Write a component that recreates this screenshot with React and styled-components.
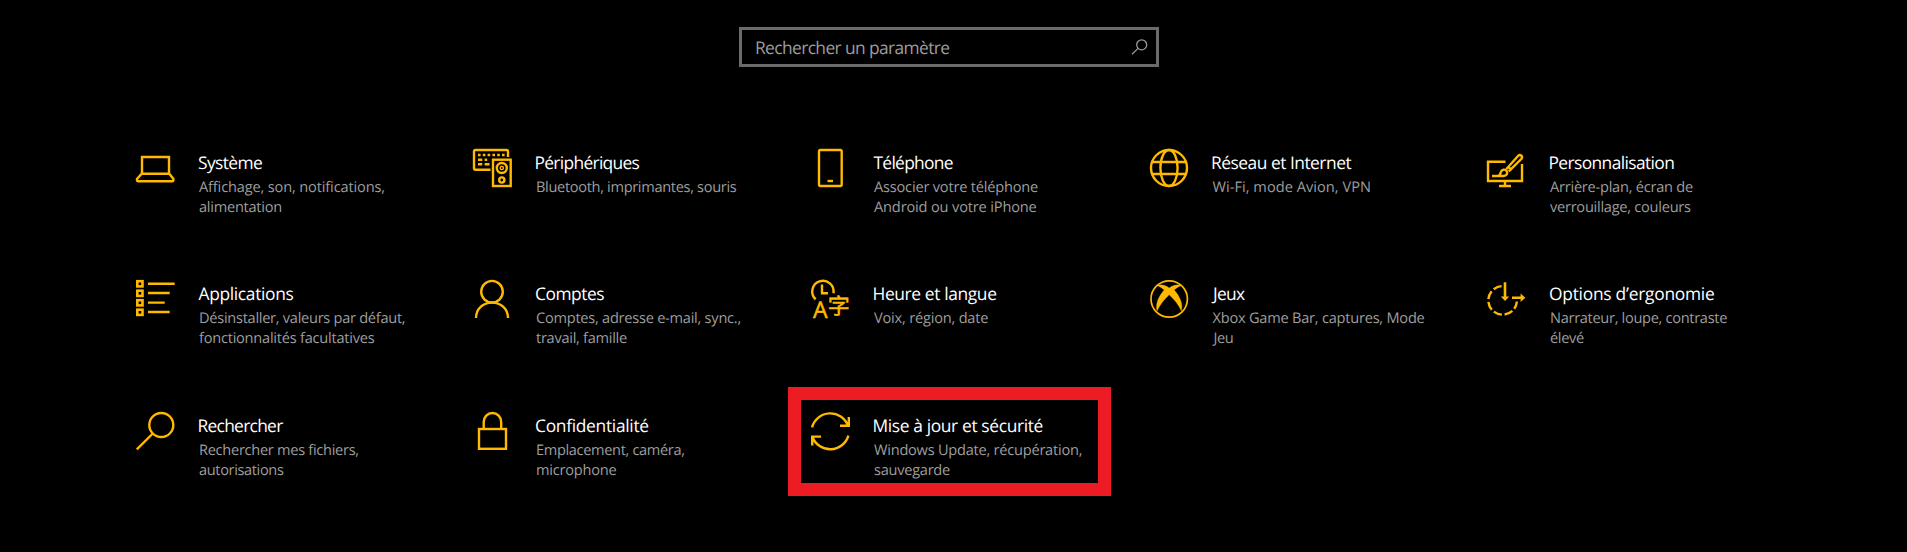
import React from "react";
import styled, { createGlobalStyle } from "styled-components";

const Global = createGlobalStyle`
  body { margin: 0; background: #000; }
`;

const Page = styled.main`
  box-sizing: border-box;
  width: 1907px;
  height: 552px;
  padding-top: 27px;
  overflow: hidden;
  background: #000;
  color: #fff;
  font-family: "Open Sans", "Noto Sans", sans-serif;
  text-rendering: geometricPrecision;
`;

const SearchBox = styled.div`
  box-sizing: border-box;
  display: flex;
  align-items: center;
  justify-content: space-between;
  width: 420px;
  height: 40px;
  margin-left: 739px;
  padding: 0 7px 0 13px;
  border: 3px solid #6b6b6b;
`;

const Text = styled.span`
  display: block;
  width: max-content;
  letter-spacing: ${(p) => p.$tracking}px;
  text-indent: ${(p) => p.$indent || 0}px;
  white-space: nowrap;
`;

const Placeholder = styled(Text)`
  padding-top: 2px;
  color: #9c9c9c;
  font-size: 17.4px;
  line-height: 24px;
`;

const SearchGlyph = styled.svg`
  width: 18px;
  height: 18px;
  fill: none;
  stroke: #999;
  stroke-width: 1.3;
`;

const Tiles = styled.div`
  display: grid;
  grid-template-columns: 337px repeat(4, 338px);
  grid-template-rows: 131px 132px 131px;
  margin: 82px 0 0 136px;
`;

const Tile = styled.section`
  position: relative;
  display: flex;
  gap: 22px;
`;

const Highlight = styled.div`
  position: absolute;
  box-sizing: border-box;
  top: -25px;
  left: -23px;
  width: 323px;
  height: 109px;
  border: 13px solid #ed1c24;
`;

const Icon = styled.svg`
  flex: none;
  width: 40px;
  height: 40px;
  overflow: visible;
  fill: none;
  stroke: #ffb900;
  stroke-width: 2.4;
`;

const Copy = styled.div`
  padding-top: 2px;
`;

const Title = styled(Text)`
  margin-bottom: 2px;
  font-size: 17.4px;
  line-height: 24px;
`;

const Detail = styled(Text)`
  padding-left: 1px;
  color: #9e9e9e;
  font-size: 14.6px;
  line-height: 20px;
`;

const Glyph = styled.text`
  fill: #ffb900;
  stroke: #ffb900;
  stroke-width: 0.5;
  font-family: "Open Sans", "Noto Sans CJK SC", sans-serif;
  font-size: ${(p) => p.$size}px;
`;

const icons = {
  system: (
    <>
      <path d="M6 24V8H33V24" />
      <path d="M5.7 24.7H33.3L37.4 30V31Q37.4 32.3 36 32.3H2.4Q1 32.3 1 31V30Z" />
    </>
  ),
  devices: (
    <>
      <path d="M17.5 20.7H2.5Q1 20.7 1 19.2V2.5Q1 1 2.5 1H33.5Q35 1 35 2.5V8" />
      <path d="M5 6H33" strokeDasharray="2.6 2.2" />
      <path d="M5 10.7H9.3M11.6 10.7H14.2M5 15.3H9.3M11.6 15.3H16.5" />
      <rect x="20" y="10.7" width="17.7" height="26.3" />
      <circle cx="28.8" cy="19" r="5" />
      <circle cx="28.8" cy="19" r="1.6" strokeWidth="1.4" />
      <circle cx="28.8" cy="31" r="2.6" />
    </>
  ),
  phone: (
    <>
      <rect x="8" y="1" width="22.7" height="36" rx="1.5" />
      <path d="M16.5 32H22" />
    </>
  ),
  network: (
    <>
      <circle cx="20" cy="19" r="18" />
      <ellipse cx="20" cy="19" rx="8.6" ry="18" />
      <path d="M3 13H37M3 25H37" />
    </>
  ),
  personalization: (
    <>
      <path d="M18.5 12.7H1V32H35V15" />
      <path d="M18 33V37M12 37H24" />
      <path d="M5 27H16.5C19.5 27 21 24.5 19.8 22.2C18 19.6 14.4 20.4 13.7 23.4C13.4 25.3 12.8 26.5 11 27" />
      <path d="M19.2 20.2L31.2 6.8Q32.6 5.4 34.2 6.5Q35.8 8 34.5 9.8L21.8 22.4M21.2 17.8L24.4 20.6" />
    </>
  ),
  apps: (
    <>
      {[3.8, 13.3, 22.8, 32.3].map((y) => (
        <rect key={y} x="1.3" y={y - 2.6} width="5.2" height="5.2" strokeWidth="2.6" />
      ))}
      <path d="M12 3.7H38.7M12 13H33.7M12 22.6H28.7M12 32H33.7" />
    </>
  ),
  accounts: (
    <>
      <circle cx="19" cy="11.7" r="10.8" />
      <path d="M3 38C3 29 10 22.6 19 22.6S35 29 35 38" />
    </>
  ),
  time: (
    <>
      <path d="M4.6 19.4A10.7 10.7 0 1 1 22.5 13.3" />
      <path d="M11 4.5V13.3H17" />
      <Glyph x="2.1" y="38" $size={23}>A</Glyph>
      <Glyph x="16.8" y="34" $size={22}>字</Glyph>
    </>
  ),
  gaming: (
    <>
      <circle cx="20.2" cy="19" r="18.2" strokeWidth="1.7" />
      <path
        d="M7.6 5.4C12 4 16.5 5.4 20.2 8C24 5.4 28.5 4 32.8 5.4C30 6 27.8 7.6 25.2 10C31 16.5 34.2 24 32.4 31C29.5 25 25.5 19.5 20.2 14.8C15 19.5 11 25 8 31C6.2 24 9.4 16.5 15.2 10C12.6 7.6 10.4 6 7.6 5.4Z"
        fill="#ffb900"
        strokeWidth="0.3"
      />
    </>
  ),
  access: (
    <>
      <path d="M14.6 6.1A14.3 14.3 0 1 0 29.9 21.5" strokeDasharray="8.6 2.8" />
      <path d="M18 2.3V18M25 17.8H35" strokeWidth="2.6" />
      <path d="M13.8 16.5H22.2L18 21ZM33.6 13.5V22.1L38.3 17.8Z" fill="#ffb900" stroke="none" />
    </>
  ),
  search: (
    <>
      <circle cx="25.3" cy="13" r="12" />
      <path d="M16.8 21.5L.8 37.3" />
    </>
  ),
  privacy: (
    <>
      <rect x="6" y="17" width="27" height="19.8" />
      <path d="M10.7 17V10A8.7 9 0 0 1 28.2 10V17" />
    </>
  ),
  update: (
    <>
      <path d="M1 15.4A18.9 18.9 0 0 1 37 13.8M37.8 5V13.8H29" />
      <path d="M37.4 23.6A19 19 0 0 1 1.4 25M1.2 33.4V24.6H10" />
    </>
  ),
};

const line = (text, tracking, indent) => ({ text, tracking, indent });

const tiles = [
  {
    icon: "system",
    title: line("Système", -0.6),
    details: [line("Affichage, son, notifications,", -0.15), line("alimentation", -0.26)],
  },
  {
    icon: "devices",
    title: line("Périphériques", -0.69, -0.5),
    details: [line("Bluetooth, imprimantes, souris", -0.33)],
  },
  {
    icon: "phone",
    title: line("Téléphone", -0.71, 0.5),
    details: [line("Associer votre téléphone", -0.2), line("Android ou votre iPhone", -0.16)],
  },
  {
    icon: "network",
    title: line("Réseau et Internet", -0.5),
    details: [line("Wi-Fi, mode Avion, VPN", 0.03, 0.5)],
  },
  {
    icon: "personalization",
    title: line("Personnalisation", -0.61, -0.5),
    details: [line("Arrière-plan, écran de", -0.24), line("verrouillage, couleurs", -0.26)],
  },
  {
    icon: "apps",
    title: line("Applications", -0.34, 0.5),
    details: [line("Désinstaller, valeurs par défaut,", -0.28), line("fonctionnalités facultatives", -0.24)],
  },
  {
    icon: "accounts",
    title: line("Comptes", -0.47),
    details: [line("Comptes, adresse e-mail, sync.,", -0.25), line("travail, famille", -0.28)],
  },
  {
    icon: "time",
    title: line("Heure et langue", -0.38, -0.5),
    details: [line("Voix, région, date", -0.2)],
  },
  {
    icon: "gaming",
    title: line("Jeux", -0.7, 2),
    details: [line("Xbox Game Bar, captures, Mode", -0.23, 0.5), line("Jeu", -0.4, 1.5)],
  },
  {
    icon: "access",
    title: line("Options d’ergonomie", -0.26),
    details: [line("Narrateur, loupe, contraste", -0.31), line("élevé", -0.35)],
  },
  {
    icon: "search",
    title: line("Rechercher", -0.72, -0.5),
    details: [line("Rechercher mes fichiers,", -0.29), line("autorisations", -0.37)],
  },
  {
    icon: "privacy",
    title: line("Confidentialité", -0.31),
    details: [line("Emplacement, caméra,", -0.35), line("microphone", -0.24)],
  },
  {
    icon: "update",
    title: line("Mise à jour et sécurité", -0.37, -0.5),
    details: [line("Windows Update, récupération,", -0.24), line("sauvegarde", -0.27)],
    highlighted: true,
  },
];

export default function App() {
  return (
    <Page>
      <Global />
      <SearchBox>
        <Placeholder $tracking={-0.62}>Rechercher un paramètre</Placeholder>
        <SearchGlyph viewBox="0 0 18 18">
          <circle cx="10.7" cy="6.8" r="5" />
          <path d="M7.1 10.4L1 16.3" />
        </SearchGlyph>
      </SearchBox>
      <Tiles>
        {tiles.map(({ icon, title, details, highlighted }) => (
          <Tile key={icon}>
            <Icon viewBox="0 0 40 40">{icons[icon]}</Icon>
            <Copy>
              <Title $tracking={title.tracking} $indent={title.indent}>
                {title.text}
              </Title>
              {details.map((d) => (
                <Detail key={d.text} $tracking={d.tracking} $indent={d.indent}>
                  {d.text}
                </Detail>
              ))}
            </Copy>
            {highlighted && <Highlight />}
          </Tile>
        ))}
      </Tiles>
    </Page>
  );
}
